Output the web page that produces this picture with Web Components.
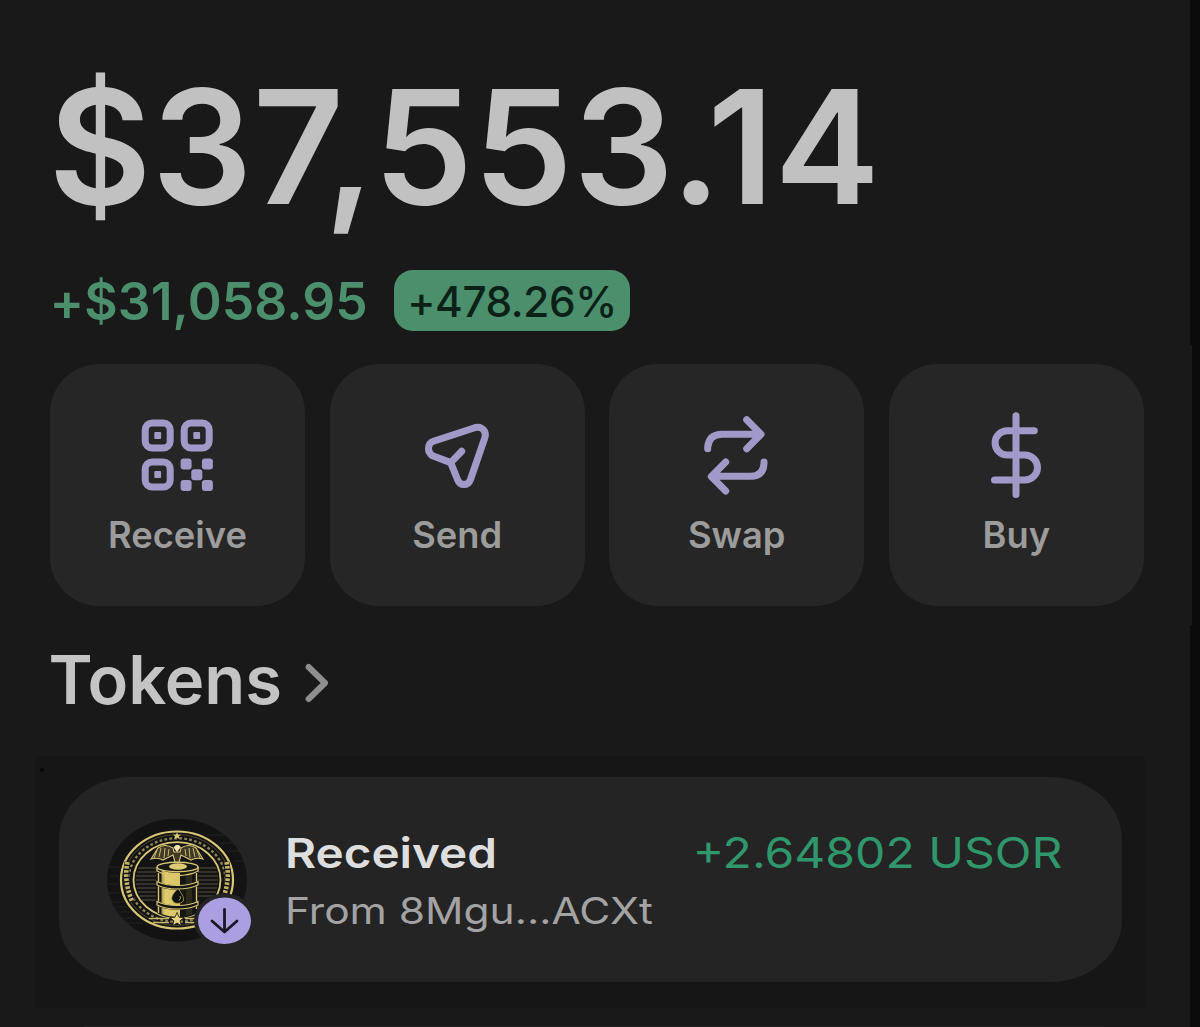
<!DOCTYPE html>
<html lang="en">
<head>
<meta charset="utf-8">
<title>Wallet</title>
<style>
  html, body { margin: 0; height: 100%; background: #191919; }
  body {
    overflow: hidden;
    font-family: Inter, "Liberation Sans", sans-serif;
    --card: #262626;
    --accent: #a199c7;
    --green: #4b8f6c;
  }
</style>
</head>
<body>
<wallet-app>
  <wallet-balance slot="balance" change="+$31,058.95" percent="+478.26%">$37,553.14</wallet-balance>
  <wallet-action slot="actions" icon="receive">Receive</wallet-action>
  <wallet-action slot="actions" icon="send">Send</wallet-action>
  <wallet-action slot="actions" icon="swap">Swap</wallet-action>
  <wallet-action slot="actions" icon="buy">Buy</wallet-action>
  <section-title slot="title">Tokens</section-title>
  <activity-row slot="activity">
    <token-avatar slot="avatar"></token-avatar>
    <span slot="title">Received</span>
    <span slot="subtitle">From 8Mgu...ACXt</span>
    <span slot="amount">+2.64802 USOR</span>
  </activity-row>
</wallet-app>

<script>
/** Attach an open shadow root holding the given markup */
function render(el, html) {
  el.attachShadow({ mode: 'open' }).innerHTML = html;
}

/** wallet-app - page shell with the balance, actions and activity areas */
class WalletApp extends HTMLElement {
  constructor() {
    super();
    render(this, `
      <style>
        :host {
          display: grid;
          grid-template-columns: 1fr 10px;
          height: 1027px;
          background: #191919;
        }
        .edge { display: flow-root; background: #0b0b0b; }
        .edge i { display: block; width: 2px; height: 280px; margin-top: 345px; background: #1a1a1a; }
        main { display: flex; flex-direction: column; min-width: 0; }
        .actions {
          display: grid;
          grid-template-columns: repeat(4, 1fr);
          gap: 24.6px;
          height: 242px;
          margin: 33px 47px 0 50px;
        }
        .activity {
          box-sizing: border-box;
          position: relative;
          width: 1110px;
          height: 252px;
          margin: 39px 0 0 35px;
          padding: 20.5px 23px 26px 24px;
          background: #161616;
        }
        /* speck lying over the panel's corner */
        .activity::before {
          content: "";
          position: absolute;
          left: 5px;
          top: 12px;
          width: 4px;
          height: 4px;
          border-radius: 50%;
          background: #060606;
        }
        .next {
          width: 1020px;
          height: 1px;
          margin: 18px 0 0 84px;
          background: #242424;
        }
      </style>
      <main>
        <slot name="balance"></slot>
        <div class="actions"><slot name="actions"></slot></div>
        <slot name="title"></slot>
        <div class="activity"><slot name="activity"></slot></div>
        <div class="next"></div>
      </main>
      <div class="edge"><i></i></div>
    `);
  }
}

/** wallet-balance - total value with its change and percent badge */
class WalletBalance extends HTMLElement {
  constructor() {
    super();
    render(this, `
      <style>
        :host { display: block; padding: 67px 0 0 50px; height: 264px; }
        .total {
          height: 160px;
          margin-left: -1.5px;
          line-height: 160px;
          font-size: 158.4px;
          font-weight: 600;
          letter-spacing: 0.2px;
          color: #c1c1c1;
          white-space: nowrap;
        }
        .row { display: flex; align-items: center; height: 61px; margin-top: 43px; }
        .change {
          width: 344.5px;
          margin-left: -0.5px;
          line-height: 60px;
          padding-top: 1px;
          font-size: 51.5px;
          font-weight: 600;
          letter-spacing: 0.1px;
          color: var(--green);
          white-space: nowrap;
        }
        .percent {
          display: flex;
          align-items: center;
          justify-content: center;
          box-sizing: border-box;
          width: 236px;
          height: 61px;
          padding-top: 2px;
          border-radius: 19px;
          background: var(--green);
          color: #0b2117;
          font-size: 42.3px;
          font-weight: 500;
          letter-spacing: -0.4px;
        }
      </style>
      <div class="total"><slot></slot></div>
      <div class="row">
        <div class="change">${this.getAttribute('change')}</div>
        <div class="percent"><span>${this.getAttribute('percent')}</span></div>
      </div>
    `);
  }
}

const ICONS = {
  receive: `
    <rect x="95.2" y="59" width="25" height="25" rx="7"/>
    <rect x="134.2" y="59" width="25" height="25" rx="7"/>
    <rect x="95.2" y="98" width="25" height="25" rx="7"/>
    <g fill="currentColor" stroke="none">
      <rect x="104.3" y="68.1" width="6.8" height="6.8" rx="1"/>
      <rect x="143.3" y="68.1" width="6.8" height="6.8" rx="1"/>
      <rect x="104.3" y="107.1" width="6.8" height="6.8" rx="1"/>
      <rect x="130.6" y="94.5" width="11" height="11" rx="3"/>
      <rect x="151.9" y="94.5" width="11" height="11" rx="3"/>
      <rect x="141.3" y="105.3" width="11" height="11" rx="3"/>
      <rect x="130.6" y="116" width="11" height="11" rx="3"/>
      <rect x="151.9" y="116" width="11" height="11" rx="3"/>
    </g>`,
  send: `
    <path d="M131.7 87.3L120.7 98.6"/>
    <path d="M120.7 98.6L102.5 91.8Q98.5 89 98.5 84.8 98.5 79 103.500 77.3L145.5 63.5Q150.5 62.3 153.5 65.8 156.3 69 154.800 73.8L140.3 116Q138.5 120.6 134 120.6 129.5 120.6 127.7 116Z"/>`,
  swap: `
    <path d="M98.700 84.8V83.5Q99.5 70.5 113 70.2H151M137.7 55.8L152 70.2 137.7 84.8M155 98V99.300Q154.5 112.300 141.5 112.300H103M116.700 98L102.3 112.500 116.7 127"/>`,
  buy: `
    <path d="M127 51.8V130.5M145.3 66.800H118.3A12.2 12.1 0 0 0 118.3 91H136A12.5 12.5 0 0 1 136 116H105.5"/>`,
};

/** wallet-action - large tile button with an icon over its label */
class WalletAction extends HTMLElement {
  constructor() {
    super();
    render(this, `
      <style>
        :host {
          display: grid;
          grid-template-rows: 148px 1fr;
          border-radius: 49px;
          background: var(--card);
          color: var(--accent);
        }
        svg { display: block; width: 255px; height: 147px; }
        .label {
          line-height: 46px;
          text-align: center;
          font-size: 36.3px;
          font-weight: 600;
          color: #9c9c9c;
        }
      </style>
      <svg viewBox="0 0 255 147" fill="none" stroke="currentColor" stroke-width="7"
           stroke-linecap="round" stroke-linejoin="round">${ICONS[this.getAttribute('icon')]}</svg>
      <div class="label"><slot></slot></div>
    `);
  }
}

/** section-title - heading with a trailing chevron */
class SectionTitle extends HTMLElement {
  constructor() {
    super();
    render(this, `
      <style>
        :host { display: flex; align-items: center; height: 80px; margin: 31px 0 0 48.5px; }
        .text {
          width: 255.5px;
          padding-top: 5px;
          line-height: 80px;
          font-size: 66.9px;
          font-weight: 600;
          color: #c4c4c4;
          white-space: nowrap;
        }
        svg { display: block; width: 26px; height: 44px; margin-top: 9px; }
      </style>
      <div class="text"><slot></slot></div>
      <svg viewBox="0 0 26 44" fill="none" stroke="#8e8e8e" stroke-width="6"
           stroke-linecap="round" stroke-linejoin="round"><path d="M4.6 7L21 23 4.6 39"/></svg>
    `);
  }
}

/** token-avatar - oil barrel seal with an incoming transfer badge */
class TokenAvatar extends HTMLElement {
  constructor() {
    super();
    render(this, `
      <style>
        :host { display: block; }
        svg { display: block; width: 146px; height: 128px; }
      </style>
      <svg viewBox="0 0 146 128" fill="none">
        <defs>
          <clipPath id="face"><ellipse cx="70" cy="61" rx="70" ry="61.5"/></clipPath>
          <linearGradient id="gold"><stop offset="0" stop-color="#a9954b"/><stop offset=".2" stop-color="#e0cb6c"/><stop offset="1" stop-color="#d9c466"/></linearGradient>
        </defs>
        <ellipse cx="70" cy="61" rx="70" ry="61.5" fill="#131313"/>
        <g clip-path="url(#face)" stroke="#222" stroke-width="1">
          <path d="M0 48h12M3 57h9M0 65h12M0 74h13M4 83h13M3 88h17M5 93h18M12 99h18M18 104h18M100 16h30M112 24h26M118 32h20M127 42h20"/>
        </g>
        <g stroke="#d8c675">
          <ellipse cx="70" cy="61" rx="56" ry="48.5" stroke-width="2.2"/>
          <ellipse cx="70" cy="61" rx="52.8" ry="45.5" stroke="#5e5635" stroke-width=".8"/>
          <ellipse cx="70" cy="61" rx="48.5" ry="41.8" stroke="#8e8255" stroke-width="2.4" stroke-dasharray="2.8 2.2"/>
          <ellipse cx="70" cy="61" rx="43.5" ry="37.8" stroke-width="1.8"/>
        </g>
        <path d="M20.5 43Q16.5 62 25 82M119.5 43Q123.5 62 115 82" stroke="#131313" stroke-width="6"/>
        <path d="M20.5 43Q16.5 62 25 82M119.5 43Q123.5 62 115 82" stroke="#c4b36a" stroke-width="4.6" stroke-dasharray="2.6 1.5"/>
        <path d="M31 49h18M30 53h19M29 57h20M29 61h20M29 65h20M30 69h19M31 73h18M33 77h16M35 81h14M91 49h18M91 53h19M91 57h20M91 61h20M91 65h20M91 69h19M91 73h18M91 77h16" stroke="#57523f" stroke-width="1"/>
        <path d="M70 13l1 2.700h3l-2.300 1.800.8 2.800-2.500-1.700-2.500 1.700.8-2.800-2.300-1.800h3z" fill="#e0cd76"/>
        <path d="M66 29Q58 24 51 29L44 40Q51 38 56 41L66 36 68 43 65 46H75L72 43 74 36 84 41Q89 38 96 40L89 29Q82 24 74 29L73 33 67 33Z" fill="#3f3925" stroke="#d8c675" stroke-width="1.1"/>
        <path d="M50 31l-3 8M54 29l-2 9M58 29l-1 10M62 30l-1 7M90 31l3 8M86 29l2 9M82 29l1 10M78 30l1 7" stroke="#d8c675" stroke-width=".9"/>
        <path d="M66.5 28.5Q70 23.5 74 28L70 33Z" fill="#f1e4ae"/>
        <path d="M50 48V94Q58 99 70 99T91 94V48Z" fill="#151511"/>
        <path d="M54.5 51Q60 54 73 54V98Q62 98 54.5 95Z" fill="url(#gold)"/>
        <path d="M79 54l6-1V95l-6 2Z" fill="#2b281c"/>
        <g stroke="#d8c675" stroke-width="1.4">
          <ellipse cx="70.5" cy="48" rx="20.5" ry="4.8" fill="#171711"/>
          <path d="M50 48V52Q58 56.5 70.5 56.5 83 56.5 91 52V48M51.5 54V94M89.5 54V90"/>
        </g>
        <path d="M50 64.2Q58 68.5 70.500 68.5 83 68.5 91 64.2M50 84.2Q58 88.5 70.5 88.5 83 88.5 91 84.2" stroke="#151511" stroke-width="4.6"/>
        <path d="M50 62.500Q58 66.5 70.500 66.5 83 66.5 91 62.500V66Q83 70 70.500 70 58 70 50 66ZM50 82.500Q58 86.5 70.500 86.5 83 86.5 91 82.500V86Q83 90 70.500 90 58 90 50 86Z" stroke="#d8c675" stroke-width="1.2"/>
        <ellipse cx="71" cy="47.5" rx="9" ry="3.2" fill="#dccb72"/>
        <path d="M71 69.5Q63 77 65 81 67 85 71 84.5 77 84 76.5 79.5 76 76 71 69.5Z" fill="#121210" stroke="#c9b45b" stroke-width=".7"/>
        <path d="M73 77q1.500 2.500-1 4.500" stroke="#a99b5b" stroke-width="1"/>
        <path d="M42 99.5H62M46 103.5H62M78 99.5H90M78 103.5H90" stroke="#c6b56c" stroke-width="1.4"/>
        <path d="M70 93.500l2 4.700 5 .4-3.900 3.200 1.300 5-4.400-2.800-4.400 2.800 1.300-5-3.900-3.200 5-.4z" fill="#e5d37f" stroke="#141414" stroke-width=".8"/>
        <ellipse cx="117.5" cy="101.5" rx="30.5" ry="27" fill="#242424"/>
        <ellipse cx="117.5" cy="101.8" rx="26.5" ry="23.2" fill="#ab9fe1"/>
        <path d="M117.5 90.5V112M105 102L117.5 113 130 102" stroke="#1a1723" stroke-width="2.8" stroke-linecap="round" stroke-linejoin="round"/>
      </svg>
    `);
  }
}

/** activity-row - transfer entry: avatar, title over subtitle, amount */
class ActivityRow extends HTMLElement {
  constructor() {
    super();
    render(this, `
      <style>
        :host {
          display: grid;
          grid-template-columns: 178px 1fr auto;
          box-sizing: border-box;
          height: 205.5px;
          padding: 42px 60px 0 48px;
          border-radius: 72px / 62px;
          background: #242424;
        }
        .text { margin-left: -0.5px; }
        .text, .amount { white-space: nowrap; }
        .title, .subtitle, .amount { height: 58px; line-height: 58px; }
        .title, .amount { margin-top: 5.5px; }
        .title, .subtitle { transform-origin: 0 50%; }
        .title {
          font-size: 41.5px;
          font-weight: 600;
          color: #dedede;
          transform: scaleX(1.148);
        }
        .subtitle {
          font-size: 36.8px;
          color: #a3a3a3;
          transform: scaleX(1.155);
        }
        .amount {
          font-size: 42px;
          color: #30976c;
          transform-origin: 100% 50%;
          transform: scaleX(1.144);
        }
      </style>
      <slot name="avatar"></slot>
      <div class="text">
        <div class="title"><slot name="title"></slot></div>
        <div class="subtitle"><slot name="subtitle"></slot></div>
      </div>
      <div class="amount"><slot name="amount"></slot></div>
    `);
  }
}

customElements.define('wallet-app', WalletApp);
customElements.define('wallet-balance', WalletBalance);
customElements.define('wallet-action', WalletAction);
customElements.define('section-title', SectionTitle);
customElements.define('token-avatar', TokenAvatar);
customElements.define('activity-row', ActivityRow);
</script>
</body>
</html>
